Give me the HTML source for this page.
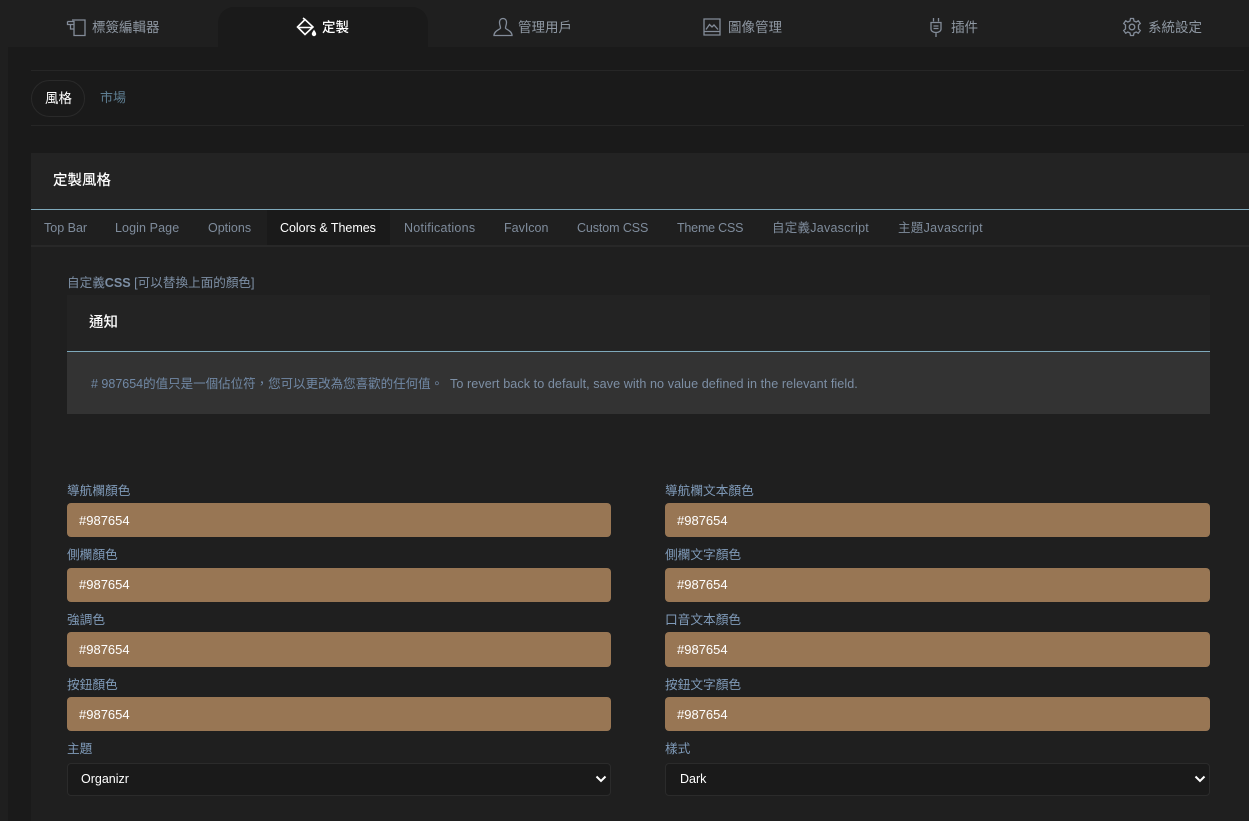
<!DOCTYPE html>
<html lang="zh-Hant">
<head>
<meta charset="utf-8">
<title>定製</title>
<style>
html,body{margin:0;padding:0;width:1249px;height:821px;overflow:hidden;background:#1f1f1f}
body{position:relative;font-family:"Liberation Sans","Noto Sans CJK TC",sans-serif;font-size:13px;color:#8d97a5}
.a{position:absolute}
.t{position:absolute;white-space:nowrap;line-height:18px}
.nav{color:#8f98a3;top:19px;font-size:13.5px}
.tab{top:219px;color:#7f8c9c;font-size:12.5px}
.lab{color:#7f9ab8;font-size:12.7px}
.inp{position:absolute;height:34px;background:#987654;border-radius:4px;color:#fff;line-height:34px;font-size:13px;box-sizing:border-box;padding-left:12px}
.sel{position:absolute;height:33px;top:763px;background:#1a1a1a;border:1px solid #2b2b2b;border-radius:4px;box-sizing:border-box;color:#fff;font-size:12.5px;line-height:30px;padding-left:13px}
svg{position:absolute;fill:none;stroke:#838c99;stroke-width:1.3}
</style>
</head>
<body>
<!-- content backgrounds -->
<div class="a" style="left:8px;top:47px;width:1241px;height:774px;background:#1a1a1a"></div>
<div class="a" style="left:218px;top:7px;width:210px;height:40px;background:#1a1a1a;border-radius:16px 16px 0 0"></div>

<!-- top nav -->
<svg style="left:66px;top:18px" width="20" height="19" viewBox="0 0 20 19"><path d="M6 2H19V17.500H8V6.500H1.500V3.500M4.500 6.500V11H8M1.500 3.500H8V6.500"/></svg>
<div class="t nav" style="left:92px">標簽編輯器</div>

<svg style="left:296px;top:17px;stroke:#fff;stroke-width:1.6" width="22" height="20" viewBox="0 0 22 20"><path d="M9 2.500L1.500 10L9 17.500L17 10ZM3 10.500H16M9 2.500L7 1"/><path d="M18 12.500C17 14.500 15.800 15.500 15.800 17A2.200 2.200 0 0 0 20.200 17C20.200 15.500 19 14.500 18 12.500Z" fill="#fff" stroke="none"/></svg>
<div class="t" style="left:322px;top:19px;color:#fff;font-size:13.5px;font-weight:500">定製</div>

<svg style="left:493px;top:17px" width="20" height="20" viewBox="0 0 20 20"><path d="M10 1.500C7.500 1.500 6.500 3.500 6.500 5.500C6.500 8 7.500 9 7.500 11C7.500 12.500 1 13.500 1 18.500H19C19 13.500 12.500 12.500 12.500 11C12.500 9 13.500 8 13.500 5.500C13.500 3.500 12.500 1.500 10 1.500Z"/></svg>
<div class="t nav" style="left:518px">管理用戶</div>

<svg style="left:703px;top:18px" width="18" height="18" viewBox="0 0 18 18"><path d="M1 1H17V17H1ZM1 13.500H17M3 11.500L6.500 6.500L9 9L11 7L15 11.500"/></svg>
<div class="t nav" style="left:728px">圖像管理</div>

<svg style="left:928px;top:17px" width="16" height="21" viewBox="0 0 16 21"><path d="M3 5.500H13V12C13 14 11 15.500 8 15.500C5 15.500 3 14 3 12ZM5.500 1V4.500M10.500 1V4.500M8 15.500V20M5.500 9H10.500M5.500 11.500H10.500"/></svg>
<div class="t nav" style="left:951px">插件</div>

<svg style="left:1122px;top:17px" width="20" height="20" viewBox="0 0 20 20"><circle cx="10" cy="10" r="2.800"/><path d="M8.500 1.500H11.500L12 4L14.200 5L16.300 3.700L18.300 6.500L16.500 8L16.500 12L18.300 13.500L16.300 16.300L14.200 15L12 16L11.500 18.500H8.500L8 16L5.800 15L3.700 16.300L1.700 13.500L3.500 12L3.500 8L1.700 6.500L3.700 3.700L5.800 5L8 4Z"/></svg>
<div class="t nav" style="left:1148px">系統設定</div>

<!-- sub nav -->
<div class="a" style="left:31px;top:70px;width:1213px;height:1px;background:#262626"></div>
<div class="a" style="left:31px;top:125px;width:1213px;height:1px;background:#262626"></div>
<div class="a" style="left:31px;top:80px;width:52px;height:35px;border:1px solid #2a2a2a;border-radius:19px"></div>
<div class="t" style="left:45px;top:90px;color:#fff;font-size:13.5px">風格</div>
<div class="t" style="left:100px;top:89px;color:#5f7f93">市場</div>

<!-- main panel -->
<div class="a" style="left:31px;top:153px;width:1218px;height:668px;background:#1f1f1f"></div>
<div class="a" style="left:31px;top:153px;width:1218px;height:56px;background:#232323"></div>
<div class="a" style="left:31px;top:209px;width:1218px;height:1px;background:#7fa9bb"></div>
<div class="t" style="left:53px;top:172px;color:#fff;font-size:14.5px;font-weight:500">定製風格</div>

<div class="a" style="left:31px;top:245px;width:1218px;height:2px;background:#282828"></div>
<div class="a" style="left:267px;top:210px;width:123px;height:35px;background:#1a1a1a"></div>
<div class="t tab" style="left:44px">Top Bar</div>
<div class="t tab" style="left:115px;letter-spacing:.1px">Login Page</div>
<div class="t tab" style="left:208px">Options</div>
<div class="t tab" style="left:280px;color:#fff;letter-spacing:-.03px">Colors &amp; Themes</div>
<div class="t tab" style="left:404px;letter-spacing:.25px">Notifications</div>
<div class="t tab" style="left:504px">FavIcon</div>
<div class="t tab" style="left:577px;letter-spacing:-.1px">Custom CSS</div>
<div class="t tab" style="left:677px;letter-spacing:-.2px">Theme CSS</div>
<div class="t tab" style="left:772px;letter-spacing:.25px">自定義Javascript</div>
<div class="t tab" style="left:898px;letter-spacing:.3px">主題Javascript</div>

<div class="t lab" style="left:67px;top:274px;color:#7d8fa5;font-size:12.6px">自定義<b>CSS</b> [可以替換上面的顏色]</div>

<!-- notice -->
<div class="a" style="left:67px;top:295px;width:1143px;height:56px;background:#232323"></div>
<div class="a" style="left:67px;top:351px;width:1143px;height:1px;background:#7fa9bb"></div>
<div class="a" style="left:67px;top:352px;width:1143px;height:62px;background:#333"></div>
<div class="t" style="left:89px;top:314px;color:#fff;font-size:14.5px;font-weight:500">通知</div>
<div class="t" style="left:91px;top:375px;color:#7189a6;font-size:12.5px"># 987654的值只是一個佔位符，您可以更改為您喜歡的任何值。<span style="position:absolute;left:359px;top:0;letter-spacing:.07px;font-size:12.6px;color:#7d8fa5">To revert back to default, save with no value defined in the relevant field.</span></div>

<!-- form left -->
<div class="t lab" style="left:67px;top:482px">導航欄顏色</div>
<div class="inp" style="left:67px;top:503px;width:544px;line-height:36px">#987654</div>
<div class="t lab" style="left:67px;top:546px">側欄顏色</div>
<div class="inp" style="left:67px;top:568px;width:544px">#987654</div>
<div class="t lab" style="left:67px;top:611px">強調色</div>
<div class="inp" style="left:67px;top:632px;width:544px;height:35px;line-height:35px">#987654</div>
<div class="t lab" style="left:67px;top:676px">按鈕顏色</div>
<div class="inp" style="left:67px;top:697px;width:544px;line-height:36px">#987654</div>
<div class="t lab" style="left:67px;top:740px">主題</div>
<div class="sel" style="left:67px;width:544px">Organizr</div>
<svg style="left:595px;top:775px;stroke:#fff;stroke-width:2" width="12" height="9" viewBox="0 0 12 9"><path d="M1.500 1.500L6 6L10.500 1.500"/></svg>

<!-- form right -->
<div class="t lab" style="left:665px;top:482px">導航欄文本顏色</div>
<div class="inp" style="left:665px;top:503px;width:545px;line-height:36px">#987654</div>
<div class="t lab" style="left:665px;top:546px">側欄文字顏色</div>
<div class="inp" style="left:665px;top:568px;width:545px">#987654</div>
<div class="t lab" style="left:665px;top:611px">口音文本顏色</div>
<div class="inp" style="left:665px;top:632px;width:545px;height:35px;line-height:35px">#987654</div>
<div class="t lab" style="left:665px;top:676px">按鈕文字顏色</div>
<div class="inp" style="left:665px;top:697px;width:545px;line-height:36px">#987654</div>
<div class="t lab" style="left:665px;top:740px">樣式</div>
<div class="sel" style="left:665px;width:545px;padding-left:14px">Dark</div>
<svg style="left:1194px;top:775px;stroke:#fff;stroke-width:2" width="12" height="9" viewBox="0 0 12 9"><path d="M1.500 1.500L6 6L10.500 1.500"/></svg>
</body>
</html>
